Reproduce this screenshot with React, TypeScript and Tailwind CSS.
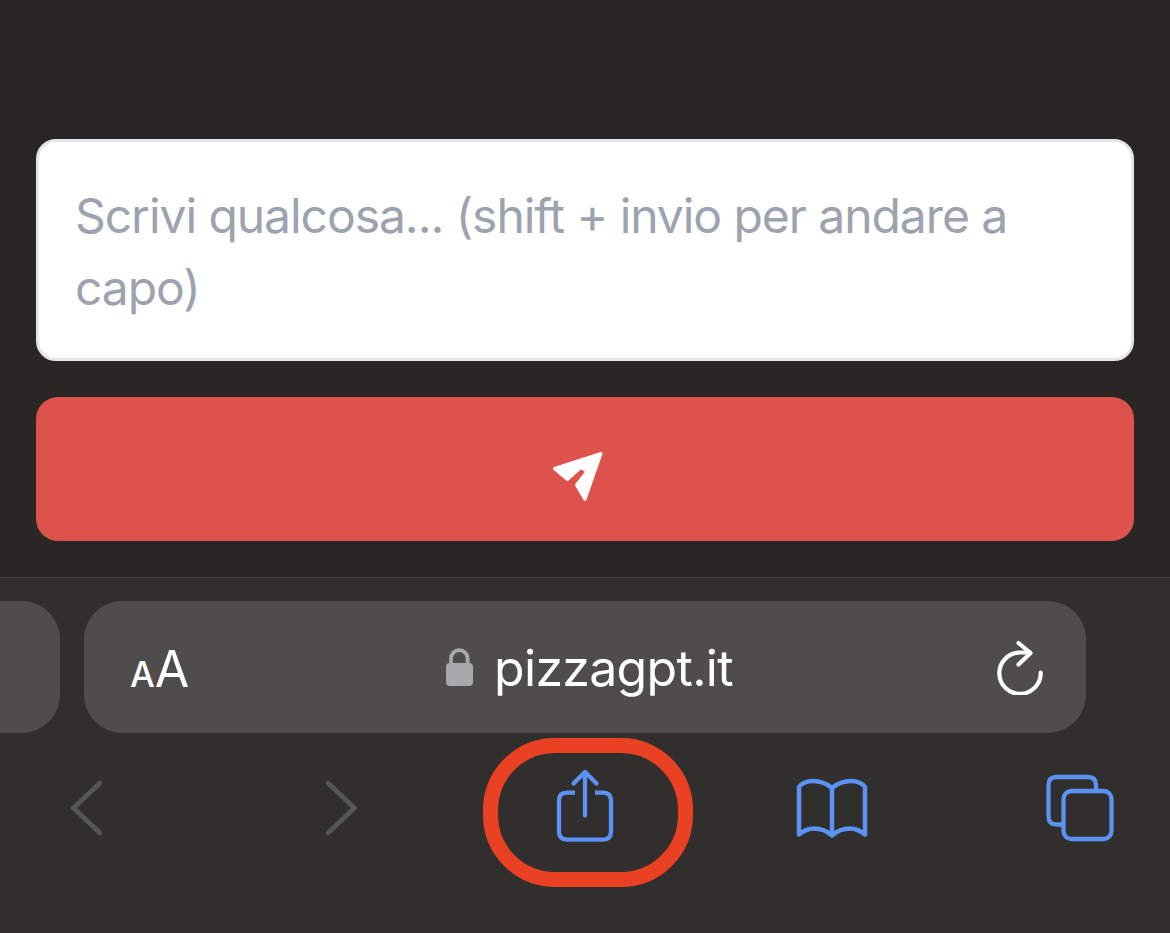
const BLUE = "#5b93f4";

function Back() {
  return (
    <svg width="40" height="76" viewBox="66 768 40 76" fill="none" stroke="#565655" strokeWidth="4.6" strokeLinecap="round" strokeLinejoin="miter">
      <path d="M100 783 L73.5 808 L100 833" />
    </svg>
  );
}

function Forward() {
  return (
    <svg width="40" height="76" viewBox="322 768 40 76" fill="none" stroke="#565655" strokeWidth="4.6" strokeLinecap="round" strokeLinejoin="miter">
      <path d="M328 783 L354.5 808 L328 833" />
    </svg>
  );
}

function Share() {
  return (
    <svg width="64" height="76" viewBox="553 768 64 76" fill="none" stroke={BLUE} strokeWidth="4.3" strokeLinecap="round" strokeLinejoin="round">
      <path d="M575 792.6 H567 Q559 792.6 559 800.6 V831.6 Q559 839.6 567 839.6 H603 Q611 839.6 611 831.6 V800.6 Q611 792.6 603 792.6 H595" strokeLinecap="butt" />
      <path d="M585 815.5 V772.5" />
      <path d="M573.5 783.5 L585 772 L596.5 783.5" />
    </svg>
  );
}

function Book() {
  return (
    <svg width="76" height="76" viewBox="794 768 76 76" fill="none" stroke={BLUE} strokeWidth="4.5" strokeLinecap="round" strokeLinejoin="round">
      <path d="M832 788 C826 783 819 781 813 781 C807 781 802 783 799 787 V834.5 C804 830.5 809 828.5 814 828.5 C821 828.5 827 831 832 835.5 C837 831 843 828.5 850 828.5 C855 828.5 860 830.5 865 834.5 V787 C862 783 857 781 851 781 C845 781 838 783 832 788 Z" />
      <path d="M832 788 V835" />
    </svg>
  );
}

function Tabs() {
  return (
    <svg width="72" height="76" viewBox="1044 768 72 76" fill="none" stroke={BLUE} strokeWidth="4.3" strokeLinejoin="round">
      <path d="M1096 791 V785 Q1096 777 1088 777 H1056.5 Q1048.5 777 1048.5 785 V816.5 Q1048.5 824.5 1056.5 824.5 H1063.5" />
      <rect x="1063.5" y="791" width="48" height="48" rx="8" />
    </svg>
  );
}

function Reload() {
  return (
    <svg width="52" height="56" viewBox="994 636 52 56" fill="none" stroke="#ffffff" strokeWidth="4.2" strokeLinecap="round" strokeLinejoin="round">
      <path d="M1040.7 669.5 A20.7 20.7 0 1 1 1020 649.5 H1030" />
      <path d="M1018.5 640 L1030.5 650 L1018.5 661.5" />
    </svg>
  );
}

function Lock() {
  return (
    <svg width="28" height="40" viewBox="445 647 28 40">
      <path d="M451 667 V658.5 A8.3 8.3 0 0 1 467.6 658.5 V667" fill="none" stroke="#a9a9ad" strokeWidth="3.8" />
      <rect x="446" y="663" width="27" height="23" rx="4" fill="#a9a9ad" />
    </svg>
  );
}

function Send() {
  return (
    <svg width="54" height="54" viewBox="551 450 54 54" fill="#ffffff" stroke="#ffffff" strokeWidth="3" strokeLinejoin="round">
      <path d="M601 453.5 L554.5 468.5 L567.5 479.5 L581 467.5 L587 471.5 L576.5 485 L585 499.5 Z" />
    </svg>
  );
}

export default function App() {
  return (
    <div className="relative flex h-[933px] w-full flex-col overflow-hidden bg-[#292625] font-['Inter','Liberation_Sans',sans-serif]">
      <main className="flex h-[577px] shrink-0 flex-col gap-9 px-9 pt-[139px]">
        <div className="h-[222px] rounded-[20px] border-[3px] border-[#e3e5ea] bg-white pl-[36px] pr-[37px] py-[38px] text-[48px] leading-[72px] tracking-[-1.05px] text-[#9ca3af]">
          Scrivi qualcosa... (shift + invio per andare a capo)
        </div>
        <button className="flex h-[144px] items-center justify-center rounded-[22px] bg-[#dd524b] pr-[14px] pt-[16px]">
          <Send />
        </button>
      </main>

      <footer className="flex flex-1 flex-col border-t border-[#454443] bg-[#302f2e]">
        <div className="mt-[23px] flex h-[132px] gap-6">
          <div className="w-[60px] rounded-r-[38px] bg-[#4e4d4b]" />
          <div className="flex w-[1002px] items-center rounded-[38px] bg-[#4e4d4b] pl-[46px] pr-[40px] text-white">
            <div className="flex w-[60px] items-baseline pt-1 leading-none">
              <span className="text-[35px] font-medium">A</span>
              <span className="text-[50px]">A</span>
            </div>
            <div className="flex flex-1 items-center justify-center gap-[21px] pr-[6px]">
              <Lock />
              <span className="pt-[2px] text-[50px] leading-none tracking-[-0.7px]">pizzagpt.it</span>
            </div>
            <Reload />
          </div>
        </div>
        <nav className="mt-[35px] flex pl-[66px]">
          <Back />
          <div className="w-[216px]" />
          <Forward />
          <div className="w-[191px]" />
          <Share />
          <div className="w-[177px]" />
          <Book />
          <div className="w-[174px]" />
          <Tabs />
        </nav>
      </footer>

      <div className="absolute left-[483px] top-[738px] h-[149px] w-[210px] rounded-[72px] border-[15px] border-[#ea4122]" />
    </div>
  );
}
